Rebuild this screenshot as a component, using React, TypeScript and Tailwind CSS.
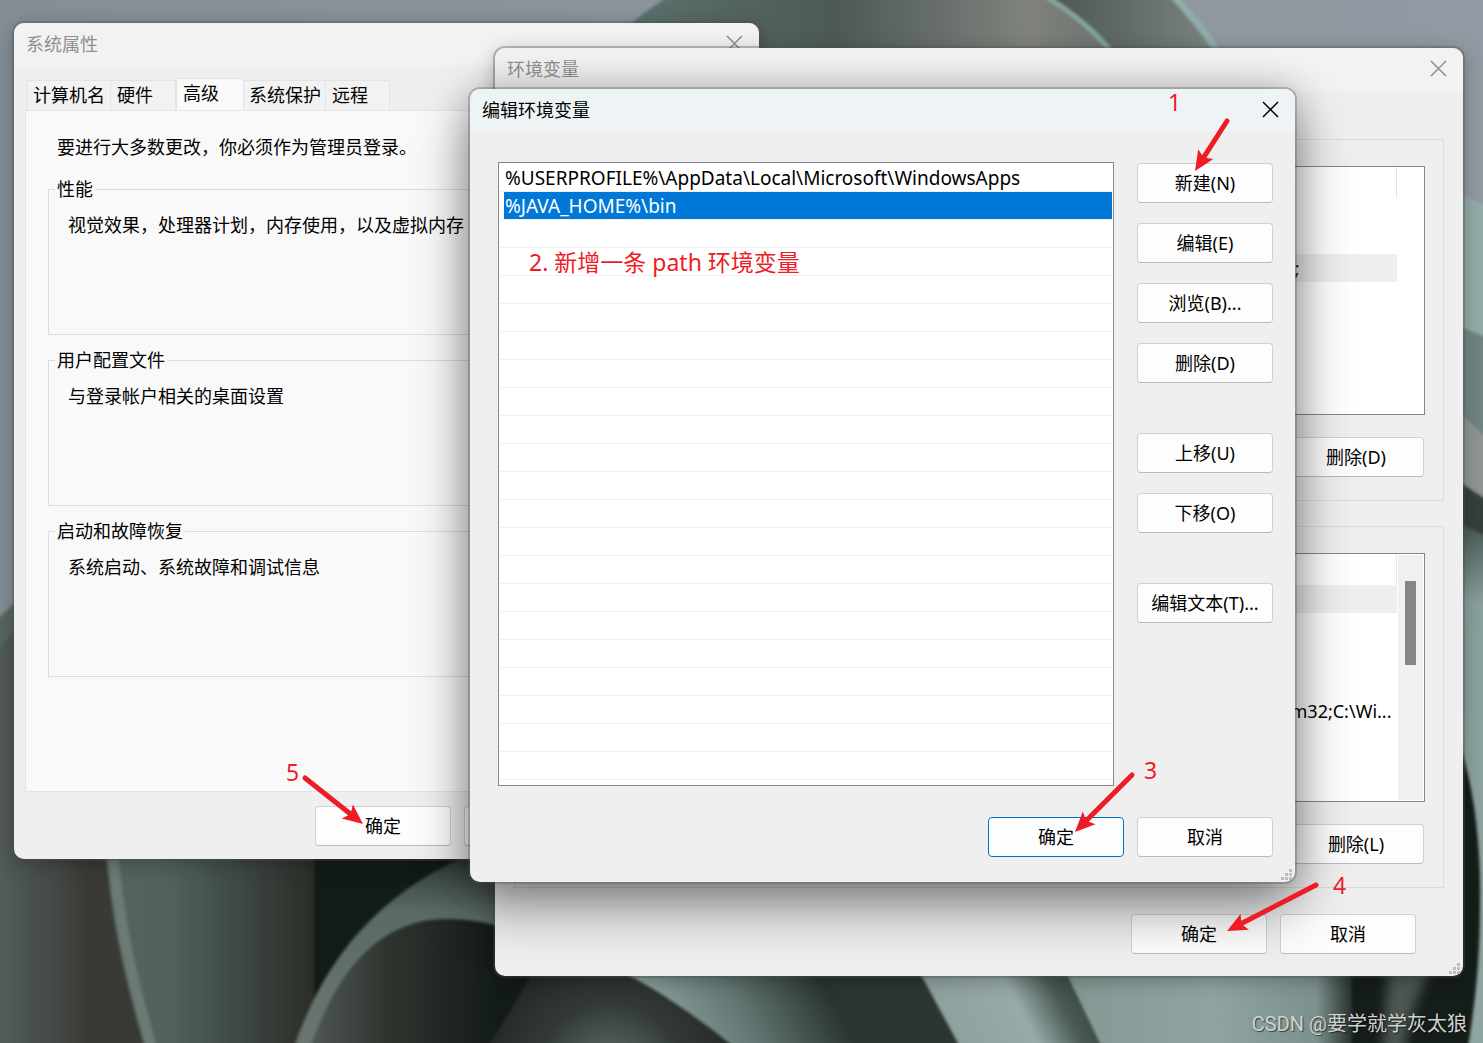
import type { ReactNode } from 'react'
import clsx from 'clsx'

const ENTRIES = ['%USERPROFILE%\\AppData\\Local\\Microsoft\\WindowsApps', '%JAVA_HOME%\\bin']
const ROW_COUNT = 22

const TABS = [
  { name: '计算机名', width: 'w-[84px]' },
  { name: '硬件', width: 'w-[65px]' },
  { name: '高级', width: 'w-[68px]' },
  { name: '系统保护', width: 'w-[82px]' },
  { name: '远程', width: 'w-[64px]' },
]

const GROUPS = [
  { title: '性能', text: '视觉效果，处理器计划，内存使用，以及虚拟内存' },
  { title: '用户配置文件', text: '与登录帐户相关的桌面设置' },
  { title: '启动和故障恢复', text: '系统启动、系统故障和调试信息' },
]

const ARROWS = [
  { from: [1227, 121], to: [1195, 171] },
  { from: [1132, 775], to: [1075, 832] },
  { from: [1316, 885], to: [1227, 931] },
  { from: [305, 778], to: [363, 824] },
]

function Wallpaper() {
  return (
    <svg className="absolute inset-0 w-full h-full" viewBox="0 0 1483 1043" preserveAspectRatio="none" aria-hidden="true">
      <defs>
        <linearGradient id="sky" x1="0" x2="1">
          <stop offset="0" stopColor="#858e95" />
          <stop offset="0.4" stopColor="#8b949b" />
          <stop offset="1" stopColor="#9299a2" />
        </linearGradient>
        <linearGradient id="topLeaf" gradientUnits="userSpaceOnUse" x1="620" x2="1100" y1="0" y2="0">
          <stop offset="0" stopColor="#5b726e" />
          <stop offset="0.45" stopColor="#4d5955" />
          <stop offset="0.85" stopColor="#7f827d" />
          <stop offset="1" stopColor="#6f7571" />
        </linearGradient>
        <linearGradient id="topLeaf2" gradientUnits="userSpaceOnUse" x1="1050" x2="1220" y1="0" y2="0">
          <stop offset="0" stopColor="#4c5753" />
          <stop offset="1" stopColor="#7c8480" />
        </linearGradient>
        <linearGradient id="leftBase" gradientUnits="userSpaceOnUse" x1="0" x2="110" y1="0" y2="0">
          <stop offset="0" stopColor="#525c57" />
          <stop offset="0.5" stopColor="#444945" />
          <stop offset="0.8" stopColor="#3a3934" />
          <stop offset="1" stopColor="#3a3a35" />
        </linearGradient>
        <linearGradient id="petal" gradientUnits="userSpaceOnUse" x1="108" x2="316" y1="0" y2="0">
          <stop offset="0" stopColor="#54645f" />
          <stop offset="0.3" stopColor="#52615d" />
          <stop offset="0.6" stopColor="#3f4a46" />
          <stop offset="1" stopColor="#2b2c27" />
        </linearGradient>
        <linearGradient id="archRim" gradientUnits="userSpaceOnUse" x1="0" x2="0" y1="855" y2="1043">
          <stop offset="0" stopColor="#2e3835" />
          <stop offset="0.3" stopColor="#5a6a67" />
          <stop offset="1" stopColor="#6a756f" />
        </linearGradient>
        <linearGradient id="archCore" gradientUnits="userSpaceOnUse" x1="310" x2="500" y1="0" y2="0">
          <stop offset="0" stopColor="#505853" />
          <stop offset="0.4" stopColor="#2f342f" />
          <stop offset="1" stopColor="#131b17" />
        </linearGradient>
        <radialGradient id="glow" gradientUnits="userSpaceOnUse" cx="610" cy="1075" r="120">
          <stop offset="0" stopColor="#63736f" />
          <stop offset="0.6" stopColor="#333a36" />
          <stop offset="1" stopColor="#262b27" />
        </radialGradient>
        <linearGradient id="blade" gradientUnits="userSpaceOnUse" x1="670" x2="820" y1="1060" y2="980">
          <stop offset="0" stopColor="#90a4a1" />
          <stop offset="0.5" stopColor="#627773" />
          <stop offset="1" stopColor="#2b3531" />
        </linearGradient>
        <linearGradient id="blade2" gradientUnits="userSpaceOnUse" x1="935" x2="1048" y1="1000" y2="939">
          <stop offset="0" stopColor="#8da19e" />
          <stop offset="0.55" stopColor="#96aaa7" />
          <stop offset="0.85" stopColor="#4a5a55" />
          <stop offset="1" stopColor="#3e4c47" />
        </linearGradient>
        <linearGradient id="blade3" gradientUnits="userSpaceOnUse" x1="1070" x2="1360" y1="0" y2="0">
          <stop offset="0" stopColor="#849894" />
          <stop offset="0.5" stopColor="#8fa4a0" />
          <stop offset="0.85" stopColor="#7c918e" />
          <stop offset="1" stopColor="#141c18" />
        </linearGradient>
        <linearGradient id="rightGreen" gradientUnits="userSpaceOnUse" x1="0" x2="0" y1="520" y2="1043">
          <stop offset="0" stopColor="#43544f" />
          <stop offset="0.16" stopColor="#8aa09e" />
          <stop offset="1" stopColor="#8ea5a1" />
        </linearGradient>
        <filter id="soft" x="-10%" y="-10%" width="120%" height="120%" colorInterpolationFilters="sRGB">
          <feGaussianBlur stdDeviation="1.5" />
        </filter>
        <filter id="softer" x="-20%" y="-20%" width="140%" height="140%" colorInterpolationFilters="sRGB">
          <feGaussianBlur stdDeviation="6" />
        </filter>
      </defs>
      <rect width="1483" height="1043" fill="url(#sky)" />

      <g filter="url(#soft)">
        {/* leaves along the top edge */}
        <path d="M1020 -10H1168C1190 15 1208 35 1230 70H1080Z" fill="url(#topLeaf2)" />
        <path d="M1168 -10C1190 15 1206 30 1228 70" fill="none" stroke="#8fadaa" strokeWidth="7" />
        <path d="M600 60C625 25 645 10 680 -10H1035C1070 10 1095 30 1120 60Z" fill="url(#topLeaf)" />
        <path d="M1035 -10C1070 10 1095 30 1118 60" fill="none" stroke="#86a5a1" strokeWidth="5" />

        {/* bottom left */}
        <path d="M-10 625L30 590V1060H-10Z" fill="#59645f" />
        <path d="M-10 660L40 600L120 850L160 1060H-10Z" fill="url(#leftBase)" />
        <path d="M105 840C110 920 125 980 148 1060H330V840Z" fill="url(#petal)" />
        <path d="M112 840C117 920 132 980 155 1060" fill="none" stroke="#6b7a75" strokeWidth="11" />
        <rect x="314" y="840" width="400" height="220" fill="#131b17" />
        <path d="M290 1060C320 960 380 890 480 850H560V1060Z" fill="url(#archRim)" />
        <path d="M306 1060C330 985 370 920 445 919C490 919 520 930 560 960V1060Z" fill="url(#archCore)" />

        {/* blades under the dialogs */}
        <path d="M535 970H900V1060H480Z" fill="url(#glow)" />
        <path d="M600 960C650 985 690 1010 750 1060H980L925 960Z" fill="url(#blade)" />
        <path d="M820 960H925L970 1060H880Z" fill="#2b3531" filter="url(#softer)" />
        <path d="M913 960L967 1060H1120L1060 960Z" fill="url(#blade2)" />
        <path d="M1060 960L1108 1060H1400V960Z" fill="url(#blade3)" />

        {/* right margin */}
        <path d="M1440 185L1495 210V350L1440 320Z" fill="#93aba8" />
        <path d="M1440 320L1495 340V450L1440 400Z" fill="#6f8583" />
        <path d="M1440 395L1495 445V560L1440 500Z" fill="#8f9692" />
        <path d="M1440 470L1495 505V560L1440 510Z" fill="#35403b" />
        <path d="M1440 515L1495 540V1060H1400V960H1440Z" fill="url(#rightGreen)" />
        <path d="M1352 1060V960H1430V690C1470 735 1481 830 1480 900C1480 970 1474 1010 1466 1060Z" fill="#151d19" />
        <path d="M1388 970H1430C1415 1000 1405 1030 1404 1060H1382Z" fill="#4c5752" filter="url(#softer)" />
      </g>
    </svg>
  )
}

function Window({ title, active, className, children, grip = true }: {
  title: string
  active?: boolean
  className: string
  children: ReactNode
  grip?: boolean
}) {
  return (
    <section
      aria-label={title}
      className={clsx(
        'absolute rounded-[10px] bg-[#efefef]',
        active
          ? 'shadow-[0_0_0_2px_rgba(80,80,80,0.3),0_0_36px_rgba(0,0,0,0.2),0_24px_56px_rgba(0,0,0,0.45)]'
          : 'shadow-[0_0_0_2px_rgba(80,80,80,0.35),0_4px_20px_rgba(0,0,0,0.28)]',
        className,
      )}
    >
      <header className={clsx(
        'flex h-[43px] items-center justify-between rounded-t-[10px] pb-[2px] pl-3 pr-4',
        active ? 'bg-[#eef4f5] text-black' : 'bg-[#f3f3f3]/80 text-[#8f8f8f]',
      )}>
        <h2>{title}</h2>
        <button type="button" aria-label="关闭" className="p-0">
          <svg width="17" height="17" viewBox="0 0 17 17" fill="none" stroke="currentColor" strokeWidth="1.5">
            <path d="M1 1L16 16M16 1L1 16" />
          </svg>
        </button>
      </header>
      {children}
      {grip && (
        <svg className="absolute right-[3px] bottom-[2px]" width="11" height="11" viewBox="0 0 11 11" fill="#bdbdbd" aria-hidden="true">
          <path d="M8 0h3v3h-3zM4 4h3v3h-3zM8 4h3v3h-3zM0 8h3v3h-3zM4 8h3v3h-3zM8 8h3v3h-3z" />
        </svg>
      )}
    </section>
  )
}

function Button({ children, primary, label }: { children?: ReactNode; primary?: boolean; label?: string }) {
  return (
    <button
      type="button"
      aria-label={label}
      className={clsx(
        'h-10 w-[136px] shrink-0 rounded border bg-[#fdfdfd]',
        primary ? 'border-[#0071c7]' : 'border-[#d0d0d0] border-b-[#bababa]',
      )}
    >
      {children}
    </button>
  )
}

function SystemProperties() {
  return (
    <Window title="系统属性" className="left-[14px] top-[23px] w-[745px]" grip={false}>
      <div className="pl-[11px] pr-[10px] pt-3">
        <div role="tablist" className="flex items-end pl-[2px]">
          {TABS.map((tab, i) => {
            const selected = tab.name === '高级'
            return (
              <button
                key={tab.name}
                type="button"
                role="tab"
                aria-selected={selected}
                className={clsx(
                  'border border-b-0 border-[#e3e3e3] text-left',
                  tab.width,
                  selected ? 'h-8 bg-[#f9f9f9] pb-1' : 'h-[30px] bg-[#f2f2f2] pb-[2px]',
                  !selected && i > 0 && 'border-l-0',
                  i === 0 || i === 3 ? 'pl-[5px]' : 'pl-[6px]',
                )}
              >
                {tab.name}
              </button>
            )
          })}
        </div>
        <div role="tabpanel" className="border border-t-0 border-[#e3e3e3] bg-[#f9f9f9] px-[22px] pt-[25px] pb-[114px] shadow-[inset_0_1px_0_#e6e6e6]">
          <p className="pl-[9px] leading-6">要进行大多数更改，你必须作为管理员登录。</p>
          <div className="mt-[18px] flex flex-col gap-[13px]">
            {GROUPS.map(group => (
              <fieldset key={group.title} className="h-[158px] border border-[#dcdcdc] pl-[19px]">
                <legend className="-ml-[13px] px-[2px] leading-6">{group.title}</legend>
                <p className="pt-3 leading-6">{group.text}</p>
              </fieldset>
            ))}
          </div>
        </div>
        <div className="flex justify-end gap-[13px] pt-[14px] pb-[13px] pr-[149px]">
          <Button>确定</Button>
          <Button label="取消" />
        </div>
      </div>
    </Window>
  )
}

function VariableTable({ label, selectedRow, values, scroll }: {
  label: string
  selectedRow: number
  values: string[]
  scroll?: boolean
}) {
  return (
    <div className="flex h-[249px] border border-[#828790] bg-white pr-px">
      <table aria-label={label} className="w-full self-start">
        <thead>
          <tr className="h-[31px]">
            <th className="border-r border-[#e5e5e5]" />
          </tr>
        </thead>
        <tbody>
          {values.map((value, i) => (
            <tr key={i} className={clsx('h-7', i === selectedRow && 'bg-[#efefef]')}>
              <td className="p-0 text-right">
                <span className={clsx(scroll ? 'pr-[5px]' : 'pr-[97px]')}>{value}</span>
              </td>
            </tr>
          ))}
        </tbody>
      </table>
      {scroll ? (
        <div className="my-px ml-px w-[25px] shrink-0 bg-[#f0f0f0] pt-[26px]">
          <div className="ml-[7px] h-[84px] w-[11px] bg-[#868686]" />
        </div>
      ) : (
        <div className="w-[26px] shrink-0" />
      )}
    </div>
  )
}

function EnvironmentVariables() {
  return (
    <Window title="环境变量" className="left-[495px] top-[48px] w-[968px]">
      <div className="flex flex-col gap-[25px] px-[19px] pt-12">
        <div className="border border-[#dcdcdc] px-[18px] pt-[26px] pb-[23px]">
          <VariableTable label="用户变量" selectedRow={2} values={['', '', ';']} />
          <div className="flex justify-end pt-[22px] pr-px">
            <Button>删除(D)</Button>
          </div>
        </div>
        <div className="border border-[#dcdcdc] px-[18px] pt-[26px] pb-[23px]">
          <VariableTable label="系统变量" selectedRow={0} values={['', '', '', '', 'm32;C:\\Wi...']} scroll />
          <div className="flex justify-end pt-[22px] pr-px">
            <Button>删除(L)</Button>
          </div>
        </div>
      </div>
      <div className="flex justify-end gap-[13px] pt-[26px] pr-[47px] pb-[22px]">
        <Button>确定</Button>
        <Button>取消</Button>
      </div>
    </Window>
  )
}

function EditVariable() {
  return (
    <Window title="编辑环境变量" active className="left-[470px] top-[89px] w-[825px]">
      <div className="flex gap-[23px] pl-7 pr-[22px] pt-[30px]">
        <ul className="flex-1 border border-[#828790] bg-white px-px pt-px pb-[5px] text-[19px]">
          {Array.from({ length: ROW_COUNT }, (_, i) => (
            <li key={i} className="h-7 border-b border-[#efefef] pl-1">
              {ENTRIES[i] && (
                <span className={clsx('block h-[27px] pl-px leading-7', i === 1 && 'bg-[#0078d7] text-white')}>
                  {ENTRIES[i]}
                </span>
              )}
            </li>
          ))}
        </ul>
        <div className="flex flex-col gap-[50px] pt-px">
          <div className="flex flex-col gap-5">
            <Button>新建(N)</Button>
            <Button>编辑(E)</Button>
            <Button>浏览(B)...</Button>
            <Button>删除(D)</Button>
          </div>
          <div className="flex flex-col gap-5">
            <Button>上移(U)</Button>
            <Button>下移(O)</Button>
          </div>
          <Button>编辑文本(T)...</Button>
        </div>
      </div>
      <div className="flex justify-end gap-[13px] pt-[31px] pr-[22px] pb-[25px]">
        <Button primary>确定</Button>
        <Button>取消</Button>
      </div>
    </Window>
  )
}

function Arrow({ from, to }: { from: number[]; to: number[] }) {
  const dx = to[0] - from[0]
  const dy = to[1] - from[1]
  const length = Math.hypot(dx, dy)
  const angle = (Math.atan2(dy, dx) * 180) / Math.PI
  return (
    <g transform={`translate(${from[0]} ${from[1]}) rotate(${angle})`}>
      <line x1="0" y1="0" x2={length - 14} y2="0" stroke="#ee1c25" strokeWidth="5" strokeLinecap="round" />
      <path d={`M${length} 0l-20 -9l4 9l-4 9z`} fill="#ee1c25" />
    </g>
  )
}

function Annotations() {
  return (
    <div className="pointer-events-none text-[23px] leading-8 text-[#ee1c25]">
      <svg className="absolute left-0 top-0" width="1483" height="1043" viewBox="0 0 1483 1043" aria-hidden="true">
        {ARROWS.map((arrow, i) => <Arrow key={i} {...arrow} />)}
      </svg>
      <span className="absolute left-[1168px] top-[86px]">1</span>
      <span className="absolute left-[529px] top-[246px] whitespace-nowrap">2. 新增一条 path 环境变量</span>
      <span className="absolute left-[1144px] top-[754px]">3</span>
      <span className="absolute left-[1333px] top-[869px]">4</span>
      <span className="absolute left-[286px] top-[756px]">5</span>
    </div>
  )
}

export default function App() {
  return (
    <main className="relative min-h-screen overflow-hidden bg-[#8b949b] font-['Noto_Sans','Noto_Sans_CJK_SC',sans-serif] text-[18px] leading-6 text-black">
      <Wallpaper />
      <SystemProperties />
      <EnvironmentVariables />
      <EditVariable />
      <Annotations />
      <p className="absolute right-4 bottom-[5px] font-['Roboto','Noto_Sans_CJK_SC',sans-serif] text-[20px] leading-7 text-[#cfd3d2] [text-shadow:1px_1px_1px_rgba(0,0,0,0.6)]">
        CSDN @要学就学灰太狼
      </p>
    </main>
  )
}
